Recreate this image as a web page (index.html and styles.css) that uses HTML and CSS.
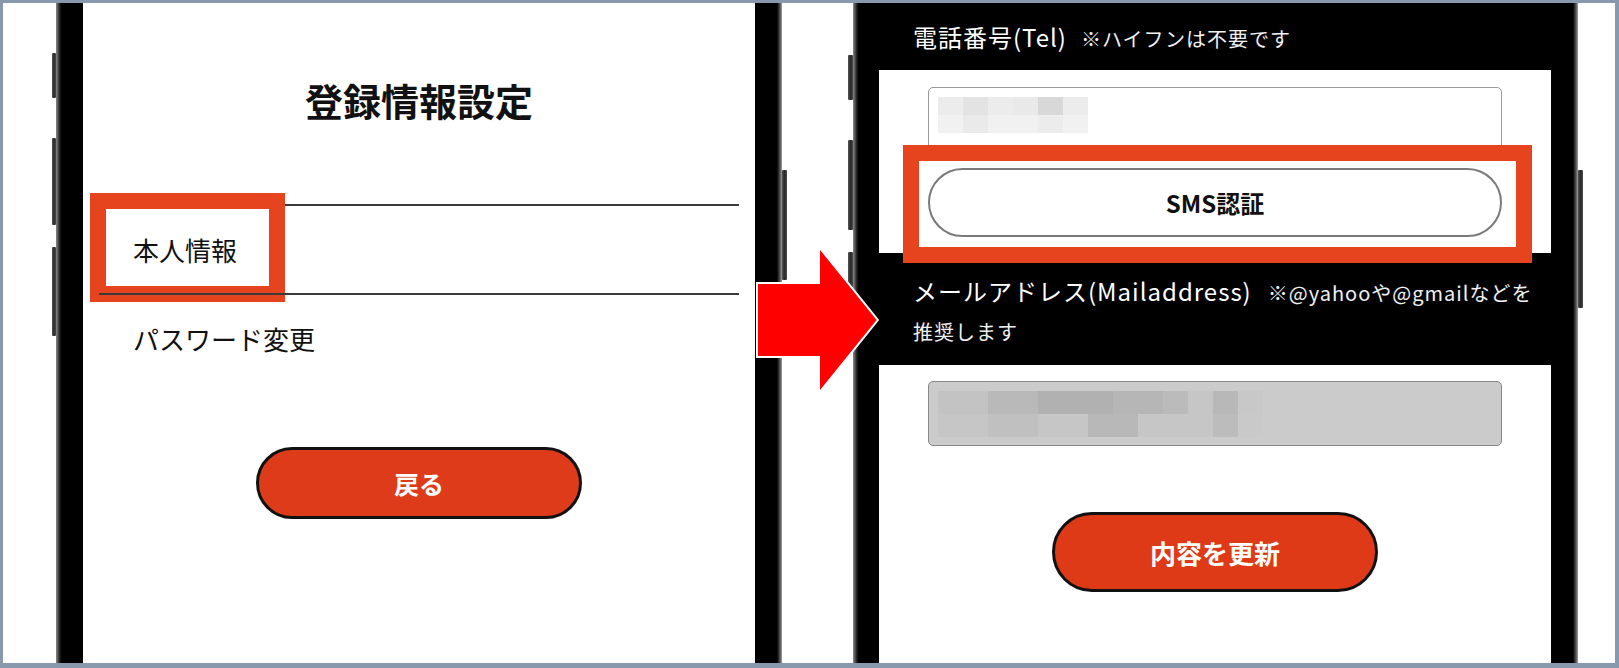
FILE: index.html
```html
<!DOCTYPE html>
<html lang="ja">
<head>
<meta charset="utf-8">
<title>登録情報設定</title>
<link rel="stylesheet" href="styles.css">
</head>
<body>
<div class="frame">
  <div class="phone phone-a">
    <div class="side side-left">
      <span class="key ka1"></span>
      <span class="key ka2"></span>
      <span class="key ka3"></span>
    </div>
    <div class="bezel bezel-left"></div>
    <div class="screen screen-a">
      <h1 class="title">登録情報設定</h1>
      <ul class="menu">
        <li class="menu-item">本人情報<span class="highlight hl-menu"></span></li>
        <li class="menu-item">パスワード変更</li>
      </ul>
      <div class="btn-row"><button class="pill-btn back-btn">戻る</button></div>
    </div>
    <div class="bezel bezel-right"></div>
    <div class="side side-right">
      <span class="key ka4"></span>
    </div>
  </div>

  <div class="phone phone-b">
    <div class="side side-left">
      <span class="key kb1"></span>
      <span class="key kb2"></span>
      <span class="key kb3"></span>
    </div>
    <div class="bezel bezel-left bezel-thin"></div>
    <div class="screen screen-b">
      <div class="label-bar label-tel">
        <span class="label-main">電話番号(Tel)</span><span class="note note-tel">※ハイフンは不要です</span>
      </div>
      <div class="field-area field-top">
        <div class="input input-tel">
          <div class="mosaic mosaic-tel">
            <i></i><i></i><i></i><i></i><i></i><i></i>
            <i></i><i></i><i></i><i></i><i></i><i></i>
          </div>
        </div>
        <div class="sms-btn">SMS認証<span class="highlight hl-sms"></span></div>
      </div>
      <div class="label-bar label-mail">
        <div class="label-line"><span class="label-main">メールアドレス(Mailaddress)</span><span class="note note-mail">※@yahooや@gmailなどを</span></div>
        <div class="label-line"><span class="note">推奨します</span></div>
      </div>
      <div class="field-area field-bottom">
        <div class="input input-mail">
          <div class="mosaic mosaic-mail">
            <i></i><i></i><i></i><i></i><i></i><i></i><i></i><i></i><i></i><i></i><i></i><i></i><i></i>
            <i></i><i></i><i></i><i></i><i></i><i></i><i></i><i></i><i></i><i></i><i></i><i></i><i></i>
          </div>
        </div>
        <div class="btn-row"><button class="pill-btn update-btn">内容を更新</button></div>
      </div>
    </div>
    <div class="bezel bezel-right"></div>
    <div class="side side-right">
      <span class="key kb4"></span>
    </div>
  </div>

  <svg class="arrow" width="124" height="150" viewBox="-2 -2 124 150" aria-hidden="true">
    <polygon points="0,36 62,36 62,0 121,73 62,146 62,110 0,110" fill="#ff0000" stroke="#ffffff" stroke-width="2" stroke-linejoin="miter"/>
  </svg>
</div>
</body>
</html>
```

FILE: styles.css
```css
* { box-sizing: border-box; }

html, body {
  margin: 0;
  padding: 0;
  background: #ffffff;
}

body {
  font-family: "Noto Sans CJK JP", "Noto Sans", sans-serif;
  color: #111111;
}

.frame {
  position: relative;
  width: 1619px;
  height: 668px;
  border-style: solid;
  border-color: #8898ad;
  border-width: 3px 4px 5px 3px;
  background: #ffffff;
  display: flex;
  align-items: stretch;
  padding-left: 49px;
  gap: 61px;
  overflow: hidden;
}

.phone {
  display: flex;
  align-items: stretch;
  height: 100%;
}

.side {
  display: flex;
  flex-direction: column;
}

.side-left { width: 4px; }
.phone-b .side-left { width: 5px; }
.side-right { width: 5px; }

.key {
  display: block;
  width: 100%;
  background: linear-gradient(to right, #555555, #2a2a2a 50%, #4a4a4a);
  border-radius: 1px;
}

.ka1 { margin-top: 50px; height: 45px; }
.ka2 { margin-top: 40px; height: 87px; }
.ka3 { margin-top: 22px; height: 89px; }
.ka4 { margin-top: 167px; height: 110px; }

.kb1 { margin-top: 52px; height: 45px; }
.kb2 { margin-top: 40px; height: 90px; }
.kb3 { margin-top: 22px; height: 88px; }
.kb4 { margin-top: 167px; height: 138px; }

.bezel {
  width: 27px;
  background: #000000;
}

.bezel-thin { width: 26px; }

.bezel-left {
  background: linear-gradient(to right, #8a8a8a, #1a1a1a 4px, #000000 6px);
}

.bezel-right {
  background: linear-gradient(to right, #000000 22px, #555555 25px, #a0a0a0 27px);
}

.screen {
  width: 672px;
  background: #ffffff;
}

/* ---------- Left screen ---------- */
.screen-a {
  padding-top: 78px;
}

.title {
  margin: 0;
  text-align: center;
  font-size: 38px;
  line-height: 38px;
  font-weight: 700;
  color: #111111;
}

.menu {
  list-style: none;
  margin: 85px 16px 0 16px;
  padding: 0;
}

.menu-item {
  position: relative;
  border-top: 2px solid #3a3a3a;
  height: 89px;
  line-height: 87px;
  padding-left: 34px;
  font-size: 26px;
  color: #111111;
}

.highlight {
  position: absolute;
  border: 16px solid #e5441f;
  pointer-events: none;
}

.hl-menu {
  left: -9px;
  top: -13px;
  width: 195px;
  height: 109px;
}

.btn-row {
  display: flex;
  justify-content: center;
}

.pill-btn {
  width: 326px;
  border: 3px solid #111111;
  border-radius: 42px;
  background: #de3b1b;
  color: #ffffff;
  font-family: "Noto Sans CJK JP", "Noto Sans", sans-serif;
  font-weight: 700;
  padding: 0;
}

.back-btn {
  margin-top: 65px;
  height: 72px;
  font-size: 25px;
}

/* ---------- Right screen ---------- */
.screen-b {
  display: flex;
  flex-direction: column;
}

.label-bar {
  background: #000000;
  color: #ffffff;
  padding-left: 34px;
  white-space: nowrap;
}

.label-tel {
  height: 67px;
  line-height: 67px;
}

.label-main {
  font-size: 24px;
  letter-spacing: 1px;
}

.note {
  font-size: 20px;
  letter-spacing: 1px;
  color: #f0f0f0;
}

.note-tel { margin-left: 14px; }
.note-mail { margin-left: 16px; }

.label-mail {
  height: 112px;
  padding-top: 17px;
}

.label-line {
  height: 41px;
  line-height: 41px;
  overflow: hidden;
}

.field-area {
  padding: 0 49px;
}

.field-top {
  padding-top: 17px;
  padding-bottom: 16px;
}

.field-bottom {
  padding-top: 16px;
  flex: 1;
}

.input {
  height: 64px;
  border: 1.5px solid #9a9a9a;
  border-radius: 5px;
  padding: 9px 9px;
}

.input-tel { background: #ffffff; }

.input-mail {
  height: 65px;
  background: #cbcbcb;
  border-color: #888888;
}

.mosaic {
  display: grid;
  grid-auto-rows: 18px;
}

.mosaic i { display: block; }

.mosaic-tel {
  grid-template-columns: repeat(6, 25px);
}

.mosaic-tel i { background: #ececec; }
.mosaic-tel i:nth-child(2) { background: #e3e3e3; }
.mosaic-tel i:nth-child(4) { background: #e9e9e9; }
.mosaic-tel i:nth-child(5) { background: #d8d8d8; }
.mosaic-tel i:nth-child(n+7) { background: #f1f1f1; }
.mosaic-tel i:nth-child(8) { background: #eaeaea; }
.mosaic-tel i:nth-child(11) { background: #ececec; }

.mosaic-mail {
  grid-template-columns: repeat(13, 25px);
  grid-auto-rows: 23px;
}

.mosaic-mail i { background: #c3c3c3; }
.mosaic-mail i:nth-child(3),
.mosaic-mail i:nth-child(4) { background: #b9b9b9; }
.mosaic-mail i:nth-child(5),
.mosaic-mail i:nth-child(6),
.mosaic-mail i:nth-child(7) { background: #b1b1b1; }
.mosaic-mail i:nth-child(8),
.mosaic-mail i:nth-child(9) { background: #b6b6b6; }
.mosaic-mail i:nth-child(10) { background: #bbbbbb; }
.mosaic-mail i:nth-child(11) { background: #c6c6c6; }
.mosaic-mail i:nth-child(12) { background: #b8b8b8; }
.mosaic-mail i:nth-child(13) { background: #c8c8c8; }
.mosaic-mail i:nth-child(n+14) { background: #c6c6c6; }
.mosaic-mail i:nth-child(16),
.mosaic-mail i:nth-child(17) { background: #c0c0c0; }
.mosaic-mail i:nth-child(20),
.mosaic-mail i:nth-child(21) { background: #b8b8b8; }
.mosaic-mail i:nth-child(25) { background: #bcbcbc; }
.mosaic-mail i:nth-child(26) { background: #c9c9c9; }

.sms-btn {
  position: relative;
  margin-top: 17px;
  height: 69px;
  border: 2px solid #7a7a7a;
  border-radius: 35px;
  background: #ffffff;
  display: flex;
  align-items: center;
  justify-content: center;
  font-size: 24px;
  font-weight: 700;
  color: #111111;
}

.hl-sms {
  left: -27px;
  top: -25px;
  width: 629px;
  height: 118px;
}

.update-btn {
  margin-top: 66px;
  height: 80px;
  font-size: 26px;
  background: #df3a18;
}

/* ---------- Arrow overlay ---------- */
.arrow {
  position: absolute;
  left: 752px;
  top: 242px;
}
```
